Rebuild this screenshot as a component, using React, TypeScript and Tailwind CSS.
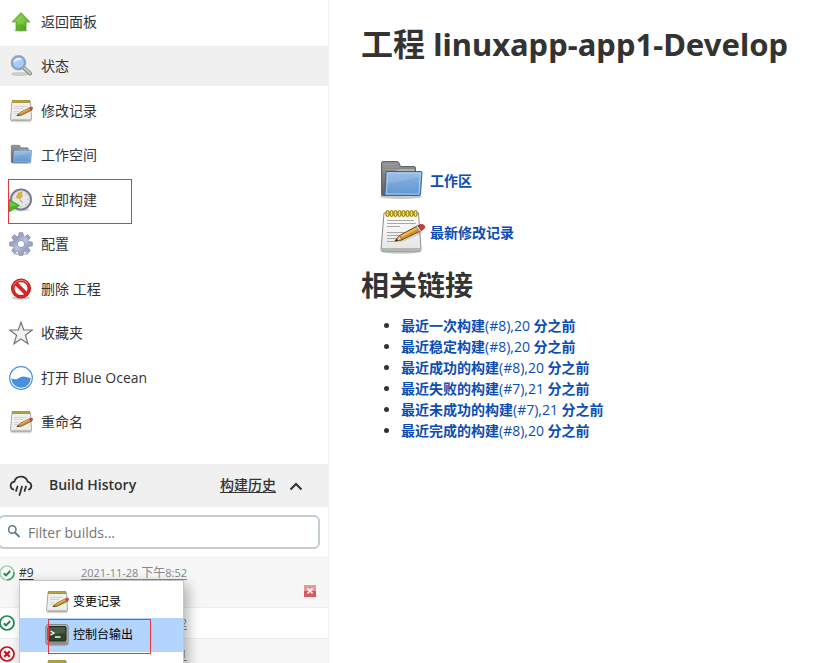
import React from "react";

type IconProps = { className?: string };

function LargeNotepadIcon() {
  return (
    <svg viewBox="0 0 48 48" className="size-12" aria-hidden="true">
      <defs>
        <linearGradient id="paper" x1="0" y1="0" x2="0" y2="1">
          <stop offset="0" stopColor="#ffffff" />
          <stop offset="1" stopColor="#e4e4e1" />
        </linearGradient>
      </defs>
      <ellipse cx="24" cy="42.500" rx="20" ry="2" fill="#000" opacity=".25" />
      <path d="M7 4h34.500L44 40.500q0 1.500-1.500 1.500h-37Q4 42 4 40.500z" fill="url(#paper)" stroke="#8c8c88" />
      <path d="M4.500 39h39.300v1.500q0 1.200-1.500 1.200h-36q-1.800 0-1.800-2.700z" fill="#b4b4b0" />
      <path d="M10 11.500h27M10 14.500h29M10 17.500h13M10 23.500h18M10 26.500h16M10 29.500h10M10 32.500h10" stroke="#a8a8a8" strokeWidth="1" />
      <g fill="#f0dc50" stroke="#8a7408" strokeWidth="1">
        {[8, 12, 16, 20, 24, 28, 32, 36].map((x) => (
          <rect key={x} x={x + 1} y="1.500" width="3" height="6" rx="1.500" />
        ))}
      </g>
      <path d="m19 34 22-13q4-1 5 3L28 32z" fill="#000" opacity=".12" />
      <path d="m18 32 4.500-5.500L40 17l3.500 5L24.500 31z" fill="#d0902c" stroke="#7a4b08" strokeWidth="1" />
      <path d="m23 27 17.500-9 1 1.500-17.500 9z" fill="#edbb65" />
      <path d="m18 32 4.500-5.500q2 1.800 2 4.500z" fill="#e8cfa0" stroke="#7a4b08" strokeWidth=".8" />
      <path d="m18 32 2-2.300 1.200 1.900z" fill="#222" />
      <path d="m39 17.500 2-1 3.500 5-2 1.200z" fill="#cfcfcf" stroke="#777" strokeWidth=".6" />
      <path d="m41 16.500q4.500-2 6.500.5 1 2.500-3 4.500z" fill="#e03434" stroke="#a02020" strokeWidth=".8" />
    </svg>
  );
}

function NotepadIcon() {
  return (
    <svg viewBox="0 0 24 24" className="size-6" aria-hidden="true">
      <path d="M2 22.500h20" stroke="#000" strokeWidth="1.500" opacity=".15" />
      <path d="M3 2.500h18.500l1 18q0 1-1 1h-19q-1 0-1-1z" fill="#efefec" stroke="#a9a9a5" />
      <path d="M2.500 20.500h19.500" stroke="#c4c4c0" strokeWidth="1.400" />
      <path d="M3 1h18v3H3z" fill="#a8963a" />
      <path d="M4 2.500h16.500" stroke="#c4b04a" strokeWidth="1.400" strokeDasharray="1 1" />
      <path d="M5 7.500h13M5 9.500h9M5 12.500h5M5 14.500h4" stroke="#cfcfcf" strokeWidth=".9" />
      <path d="m8 16.700 3-3.200 9.500-4.700 1.800 2.500-10 5z" fill="#d0912e" stroke="#7d5517" strokeWidth=".8" />
      <path d="m11.500 14 9-4.500" stroke="#ecc47a" strokeWidth=".8" />
      <path d="m7.500 17 1.800-1.900.9 1.200z" fill="#333" />
      <path d="m20.500 8.800 1.700-.8q1.800 0 1.500 2l-1.500 1.200z" fill="#dc4040" stroke="#a43030" strokeWidth=".5" />
    </svg>
  );
}

function FolderIcon({ className = "size-6" }: IconProps) {
  return (
    <svg viewBox="0 0 48 48" className={className} aria-hidden="true">
      <defs>
        <linearGradient id="folderBack" x1="0" y1="0" x2="0" y2="1">
          <stop offset="0" stopColor="#919191" />
          <stop offset="1" stopColor="#606060" />
        </linearGradient>
        <linearGradient id="folderFront" x1="0" y1="0" x2="0" y2="1">
          <stop offset="0" stopColor="#8db5e0" />
          <stop offset="1" stopColor="#6096d0" />
        </linearGradient>
      </defs>
      <ellipse cx="24" cy="39.500" rx="21" ry="2.500" fill="#000" opacity=".22" />
      <path d="M5 38.500q-.5 0-.5-1V6q0-1.500 1.500-1.500h14q1.500 0 2 1.500l1.500 3.500H37q1.500 0 1.500 1.500v27z" fill="url(#folderBack)" stroke="#666" />
      <path d="M6 7.500h14M6 10h16M6 12.500h32M6 15h3" stroke="#a9a9a9" strokeWidth=".6" />
      <path d="M23 12.500h14v3H12" fill="#f2f2f2" opacity=".45" />
      <path d="M10 14.500h34q1 0 1 1L43.500 37q0 1.500-1.500 1.500H6.500q1.500-1 1.500-2.500L9 15.500q0-1 1-1z" fill="url(#folderFront)" stroke="#3465a4" />
      <path d="M10.500 16h32.800L42 37H9q.5-1 .5-2z" fill="none" stroke="#bcd6f0" strokeWidth=".8" />
      <path d="M10 27q15-3 33-7l.3-4H10.500z" fill="#fff" opacity=".12" />
    </svg>
  );
}

function UpIcon() {
  return (
    <svg viewBox="0 0 24 24" className="size-6" aria-hidden="true">
      <defs>
        <linearGradient id="upFill" x1="0" y1="0" x2="1" y2="1">
          <stop offset="0" stopColor="#8ad44c" />
          <stop offset="1" stopColor="#3f9c0c" />
        </linearGradient>
      </defs>
      <ellipse cx="12" cy="20.500" rx="7.500" ry="1.500" fill="#000" opacity=".18" />
      <path d="M12 2.500 21 12H17v8.500H7V12H3z" fill="url(#upFill)" stroke="#5ea83a" strokeWidth=".8" strokeLinejoin="round" />
      <path d="M12 4.500 19 11.500h-3.500V15q-4-2-7 0v-3.500H5z" fill="#a9e377" opacity=".35" />
    </svg>
  );
}

function MagnifierIcon() {
  return (
    <svg viewBox="0 0 24 24" className="size-6" aria-hidden="true">
      <ellipse cx="11" cy="20" rx="9" ry="2" fill="#000" opacity=".15" />
      <path d="m15.500 14.500 5.600 5" stroke="#888" strokeWidth="4" strokeLinecap="round" />
      <path d="m15.500 14.200 5.600 5" stroke="#c8c8c8" strokeWidth="2.200" strokeLinecap="round" />
      <circle cx="9.500" cy="8.700" r="7" fill="#a9cdf2" stroke="#a4a8ae" strokeWidth="1.600" />
      <circle cx="9.500" cy="8.700" r="5.900" fill="none" stroke="#5f8fca" strokeWidth=".8" />
      <path d="M4.500 9q0-5 5-5.300 3 0 4 2-5 0-9 3.300z" fill="#e4f1fd" />
    </svg>
  );
}

function ClockIcon() {
  return (
    <svg viewBox="0 0 24 24" className="size-6" aria-hidden="true">
      <ellipse cx="12" cy="22" rx="9" ry="1.500" fill="#000" opacity=".15" />
      <circle cx="12" cy="11.500" r="10" fill="#e6e6e6" stroke="#77758c" strokeWidth="2" />
      <circle cx="12" cy="11.500" r="8.800" fill="none" stroke="#c9c8d4" strokeWidth=".7" />
      <g fill="#999">
        <circle cx="12" cy="4.500" r=".5" />
        <circle cx="19" cy="11.500" r=".5" />
        <circle cx="12" cy="18.500" r=".5" />
        <circle cx="17" cy="6.500" r=".5" />
        <circle cx="17" cy="16.500" r=".5" />
      </g>
      <path d="m9.500 4.500 3.500-.5v4.500l-2 2.500-4-1.500z" fill="#dcb63a" stroke="#c9a640" strokeWidth=".5" />
      <path d="m11 11.500 2.500 3.500" stroke="#999" strokeWidth="1" />
      <path d="M0 11.500 10.500 17.500 0 24z" fill="#4fb422" stroke="#359010" strokeWidth=".7" />
      <path d="M.8 13.200 8 17.200.8 18.500z" fill="#98e070" opacity=".5" />
    </svg>
  );
}

function GearIcon() {
  return (
    <svg viewBox="0 0 24 24" className="size-6" aria-hidden="true">
      <defs>
        <linearGradient id="gearFill" x1="0" y1="0" x2="1" y2="1">
          <stop offset="0" stopColor="#7f88b0" />
          <stop offset=".5" stopColor="#b9c4e2" />
          <stop offset="1" stopColor="#8088ae" />
        </linearGradient>
      </defs>
      <ellipse cx="12" cy="22" rx="8" ry="1.500" fill="#000" opacity=".2" />
      <g fill="#a0a8c6" stroke="#7d83a0" strokeWidth=".7">
        {[0, 45, 90, 135, 180, 225, 270, 315].map((a) => (
          <path key={a} d="M9.200 6 10.200.7h3.600L14.800 6z" transform={`rotate(${a} 12 12)`} />
        ))}
      </g>
      <circle cx="12" cy="12" r="8" fill="url(#gearFill)" />
      <circle cx="12" cy="12" r="3.700" fill="#8f98ba" />
      <circle cx="12" cy="12" r="3" fill="#fff" />
    </svg>
  );
}

function ForbiddenIcon() {
  return (
    <svg viewBox="0 0 24 24" className="size-6" aria-hidden="true">
      <ellipse cx="12" cy="21" rx="9" ry="1.800" fill="#000" opacity=".2" />
      <circle cx="12" cy="11.500" r="8.300" fill="#f6f3f3" stroke="#b01010" strokeWidth="3.400" />
      <path d="m6.500 6 11 11" stroke="#b01010" strokeWidth="3.600" />
      <circle cx="12" cy="11.500" r="8.300" fill="none" stroke="#dc2626" strokeWidth="2.400" />
      <path d="m6.300 5.800 11.400 11.400" stroke="#dc2626" strokeWidth="2.500" />
      <path d="M4.200 8.500Q7 3.500 12 3.300q4.500 0 7 3.200" fill="none" stroke="#f58a8a" strokeWidth=".9" />
    </svg>
  );
}

function StarIcon() {
  return (
    <svg viewBox="0 0 24 24" className="size-6" aria-hidden="true">
      <path d="M12 1.200 14.700 9h8.500l-6.800 5.200 2.600 8.500-7-4.800-7 4.800 2.600-8.500L.8 9h8.500z" fill="#f1f1f1" stroke="#757575" strokeWidth="1.200" />
    </svg>
  );
}

function OceanIcon() {
  return (
    <svg viewBox="0 0 24 24" className="size-6" aria-hidden="true">
      <circle cx="12" cy="12" r="11.300" fill="#fff" stroke="#4a90e2" strokeWidth="1.200" />
      <path d="M2.300 12.300q3.200 2 6.700.2 4-2.800 7.500-1.700 2.500 1 5.200 1.200a9.700 9.700 0 0 1-19.400.3z" fill="#4a90e2" />
    </svg>
  );
}

function TerminalIcon() {
  return (
    <svg viewBox="0 0 24 24" className="size-6" aria-hidden="true">
      <rect x=".8" y="1.500" width="22.400" height="20.500" rx="2.500" fill="#b9b9b0" stroke="#777" strokeWidth=".8" />
      <path d="M2 18.500h20v2q0 1-1.500 1h-17Q2 21.500 2 20.500z" fill="#8e8e85" />
      <rect x="3" y="3.500" width="18" height="14.500" rx="1" fill="#30452c" stroke="#1c291a" />
      <path d="M4 4h16v6q-8 0-16 3z" fill="#fff" opacity=".12" />
      <path d="m5.500 8 3.500 2-3.500 2M10 14h5.500" stroke="#f4fff0" strokeWidth="1.300" fill="none" />
    </svg>
  );
}

function RainIcon() {
  return (
    <svg viewBox="0 0 24 24" className="size-6" fill="none" stroke="#333" strokeWidth="1.800" strokeLinecap="round" aria-hidden="true">
      <path d="M4.500 16.500A4 4 0 0 1 4 9q1 0 1.300-.3A7 7 0 0 1 18.500 8q0 1 .8 1a4 4 0 0 1 .700 7.500" />
      <path d="m8.500 13.500-1.400 4.500M13 13.500l-2.500 8.500M17 13.500l-1.400 4.500" />
    </svg>
  );
}

function StatusIcon({ kind }: { kind: "running" | "ok" | "fail" }) {
  const color = kind === "fail" ? "#c4101c" : "#1b8a50";
  return (
    <svg viewBox="0 0 16 16" className="-ml-px size-4 shrink-0" fill="none" stroke={color} strokeWidth="1.700" role="img" aria-label={kind}>
      {kind === "running" ? (
        <>
          <circle cx="8" cy="8" r="7" stroke="#a8d2bb" />
          <path d="M8 15A7 7 0 0 0 15 7" opacity=".7" />
        </>
      ) : (
        <circle cx="8" cy="8" r="7" />
      )}
      {kind === "fail" ? <path d="m5.300 5.300 5.400 5.400m0-5.400-5.400 5.400" strokeWidth="2.200" /> : <path d="m4.800 8.200 2.200 2.200 4.200-4.400" strokeWidth="2" />}
    </svg>
  );
}

const tasks = [
  { label: "返回面板", icon: <UpIcon /> },
  { label: "状态", icon: <MagnifierIcon />, active: true },
  { label: "修改记录", icon: <NotepadIcon /> },
  { label: "工作空间", icon: <FolderIcon /> },
  { label: "立即构建", icon: <ClockIcon />, marked: true },
  { label: "配置", icon: <GearIcon /> },
  { label: "删除 工程", icon: <ForbiddenIcon /> },
  { label: "收藏夹", icon: <StarIcon /> },
  { label: "打开 Blue Ocean", icon: <OceanIcon /> },
  { label: "重命名", icon: <NotepadIcon /> },
];

const permalinks = [
  ["最近一次构建", "(#8),20", "分之前"],
  ["最近稳定构建", "(#8),20", "分之前"],
  ["最近成功的构建", "(#8),20", "分之前"],
  ["最近失败的构建", "(#7),21", "分之前"],
  ["最近未成功的构建", "(#7),21", "分之前"],
  ["最近完成的构建", "(#8),20", "分之前"],
];

const builds = [
  { id: "#9", day: "2021-11-28", half: "下午", time: "8:52", kind: "running" as const },
  { id: "#8", day: "2021-11-28", half: "下午", time: "8:32", kind: "ok" as const },
  { id: "#7", day: "2021-11-28", half: "下午", time: "8:31", kind: "fail" as const },
];

function BuildMenu() {
  return (
    <div className="absolute left-[19px] top-[23px] z-10 w-[165px] border border-[#bfc9cd] bg-white text-xs text-black shadow-[4px_4px_12px_rgba(0,0,0,0.3)]">
      <a href="#changes" className="flex h-[37px] items-center gap-1 pl-[25px] pt-1">
        <NotepadIcon />
        变更记录
      </a>
      <a href="#console" className="relative flex h-[34px] items-center gap-1 bg-[#b3d4ff] pl-[25px]">
        <TerminalIcon />
        控制台输出
        <span className="absolute left-7 top-px h-[35px] w-[103px] border border-[#e5383b]" />
      </a>
      <a href="#edit" aria-label="edit" className="flex h-[34px] items-center pl-[25px] pt-1">
        <NotepadIcon />
      </a>
    </div>
  );
}

function Sidebar() {
  return (
    <aside className="w-[329px] shrink-0 border-r border-[#eeeeee]">
      <nav className="mt-0.5 flex h-110 flex-col justify-between">
        {tasks.map((t) => (
          <a key={t.label} href="#task" className={`relative flex h-10 items-center gap-2 pl-[9px] ${t.active ? "bg-[#f0f0f0]" : ""}`}>
            {t.icon}
            {t.label}
            {t.marked && <span className="absolute -top-px left-2 h-[45px] w-[124px] border border-[#e5383b]" />}
          </a>
        ))}
      </nav>
      <section>
        <header className="mt-[22px] flex h-[43px] items-center bg-[#f0f0f0] pb-0.5 pl-[9px] pr-6">
          <RainIcon />
          <h2 className="ml-4 flex-1 font-semibold">Build History</h2>
          <a href="#trend" className="font-medium underline underline-offset-2">
            构建历史
          </a>
          <button type="button" aria-label="collapse" className="ml-3 mt-1">
            <svg viewBox="0 0 16 16" className="size-4" fill="none" stroke="#333" strokeWidth="2">
              <path d="m2.500 10.500 5.500-5.500 5.500 5.500" />
            </svg>
          </button>
        </header>
        <div className="relative -ml-0.5 mr-2 mt-2">
          <svg viewBox="0 0 16 16" className="absolute left-2 top-2 size-4" fill="none" stroke="#5b7a8b" strokeWidth="1.500" aria-hidden="true">
            <circle cx="6.300" cy="6.500" r="3.700" />
            <path d="m9 9.500 4.500 4.500" strokeWidth="1.800" />
          </svg>
          <input
            type="text"
            aria-label="Filter builds"
            placeholder="Filter builds..."
            className="block h-[34px] w-full rounded-md border-2 border-[#c3ccd1] bg-white pl-7 outline-none placeholder:text-[#757575]"
          />
        </div>
        <div className="relative mt-2 text-xs">
          {builds.map((b, i) => (
            <div key={b.id} className={`flex border-t border-[#eeeeee] pt-[7px] ${i === 0 ? "h-[50px]" : "h-[31px]"} ${i % 2 === 0 ? "bg-[#f7f7f7]" : ""}`}>
              <StatusIcon kind={b.kind} />
              <a href="#build" className="ml-1 h-4 w-[62px] leading-4 underline underline-offset-2">
                {b.id}
              </a>
              <a href="#build" className="h-4 flex-1 text-[11px] leading-4 text-[#888] underline underline-offset-2">
                {b.day} <span className="text-xs leading-4">{b.half}</span>
                {b.time}
              </a>
              {i === 0 && (
                <button type="button" aria-label="stop" className="mr-3 mt-5 size-3 bg-[#d9565a]">
                  <svg viewBox="0 0 12 12" className="size-3">
                    <path d="M0 0h12v6H0z" fill="#e6989a" />
                    <path d="m3.500 3.500 5 5m0-5-5 5" stroke="#fff" strokeWidth="1.700" />
                  </svg>
                </button>
              )}
            </div>
          ))}
          <BuildMenu />
        </div>
      </section>
    </aside>
  );
}

export default function App() {
  return (
    <div className="flex h-screen overflow-hidden bg-white font-['Open_Sans','Noto_Sans_CJK_SC',sans-serif] text-sm text-[#333]">
      <Sidebar />
      <main className="min-w-0 flex-1 pl-8 pt-5">
        <h1 className="whitespace-nowrap text-[32px] font-bold leading-12">
          工程 <span className="font-['Noto_Sans',sans-serif] text-[31px]">linuxapp-app1-Develop</span>
        </h1>
        <div className="mt-[89px] flex flex-col gap-1 pl-4 font-bold text-[#0b4eb3]">
          <a href="#ws" className="flex items-center gap-[5px]">
            <FolderIcon className="size-12" />
            工作区
          </a>
          <a href="#changes" className="flex items-center gap-[5px]">
            <LargeNotepadIcon />
            最新修改记录
          </a>
        </div>
        <h2 className="mt-2 text-[28px] font-bold leading-10">相关链接</h2>
        <ul className="mt-[10px] list-disc pl-10 leading-[21px]">
          {permalinks.map(([name, num, ago]) => (
            <li key={name}>
              <a href="#permalink" className="font-bold text-[#0b4eb3]">
                {name}
                <span className="font-normal">{num}</span> {ago}
              </a>
            </li>
          ))}
        </ul>
      </main>
    </div>
  );
}
